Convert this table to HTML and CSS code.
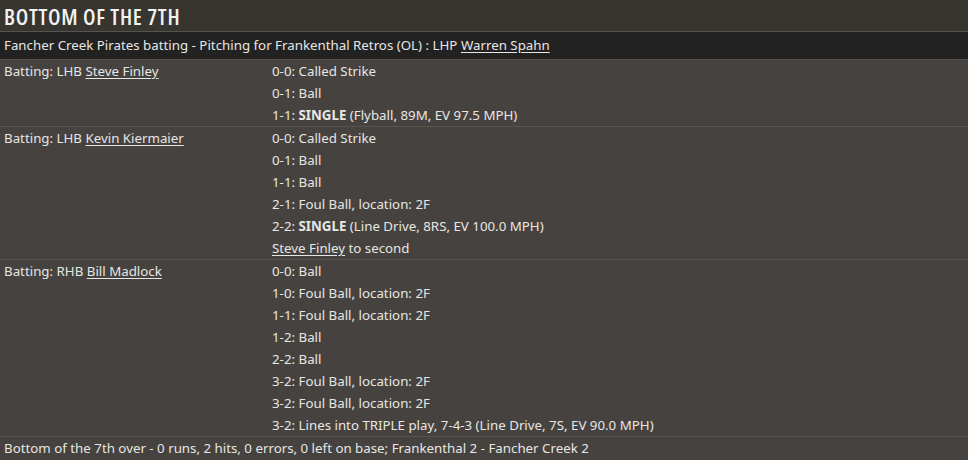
FILE: index.html
```html
<!DOCTYPE html>
<html>
<head>
<meta charset="utf-8">
<link rel="stylesheet" href="styles.css">
</head>
<body>
<div class="inning">
  <div class="title">BOTTOM OF THE 7TH</div>
  <div class="sub">Fancher Creek Pirates batting - Pitching for Frankenthal Retros (OL) : LHP <a class="pl">Warren Spahn</a></div>
  <div class="ab">
    <div class="batter">Batting: LHB <a class="pl">Steve Finley</a></div>
    <div class="pitches">
      <div class="p">0-0: Called Strike</div>
      <div class="p">0-1: Ball</div>
      <div class="p">1-1: <b>SINGLE</b> (Flyball, 89M, EV 97.5 MPH)</div>
    </div>
  </div>
  <div class="ab">
    <div class="batter">Batting: LHB <a class="pl">Kevin Kiermaier</a></div>
    <div class="pitches">
      <div class="p">0-0: Called Strike</div>
      <div class="p">0-1: Ball</div>
      <div class="p">1-1: Ball</div>
      <div class="p">2-1: Foul Ball, location: 2F</div>
      <div class="p">2-2: <b>SINGLE</b> (Line Drive, 8RS, EV 100.0 MPH)</div>
      <div class="p"><a class="pl">Steve Finley</a> to second</div>
    </div>
  </div>
  <div class="ab">
    <div class="batter">Batting: RHB <a class="pl">Bill Madlock</a></div>
    <div class="pitches">
      <div class="p">0-0: Ball</div>
      <div class="p">1-0: Foul Ball, location: 2F</div>
      <div class="p">1-1: Foul Ball, location: 2F</div>
      <div class="p">1-2: Ball</div>
      <div class="p">2-2: Ball</div>
      <div class="p">3-2: Foul Ball, location: 2F</div>
      <div class="p">3-2: Foul Ball, location: 2F</div>
      <div class="p">3-2: Lines into TRIPLE play, 7-4-3 (Line Drive, 7S, EV 90.0 MPH)</div>
    </div>
  </div>
  <div class="foot">Bottom of the 7th over - 0 runs, 2 hits, 0 errors, 0 left on base; Frankenthal 2 - Fancher Creek 2</div>
</div>
</body>
</html>
```

FILE: styles.css
```css
html, body {
  margin: 0;
  padding: 0;
  background: #45423f;
}
.inning {
  font-family: "Noto Sans", sans-serif;
  font-size: 13.3px;
  color: #e8e6e3;
  width: 968px;
  height: 460px;
  overflow: hidden;
}
.title {
  background: #363530;
  height: 31px;
  line-height: 33px;
  padding-left: 4px;
  font-family: "Open Sans", sans-serif;
  font-stretch: 75%;
  font-size: 22px;
  font-weight: 600;
  letter-spacing: 0.7px;
  color: #f2f2f2;
  border-bottom: 1px solid #56544f;
}
.sub {
  background: #222222;
  height: 27px;
  line-height: 27px;
  padding-left: 4px;
  border-bottom: 1px solid #56544f;
}
.pl {
  color: inherit;
  text-decoration: underline;
  text-underline-offset: 2px;
}
.ab {
  display: flex;
  border-bottom: 1px solid #56544f;
}
.batter {
  width: 268px;
  padding-left: 4px;
  line-height: 22px;
}
.pitches {
  flex: 1;
}
.p {
  line-height: 22px;
}
.foot {
  padding-left: 4px;
  line-height: 22px;
}
```
